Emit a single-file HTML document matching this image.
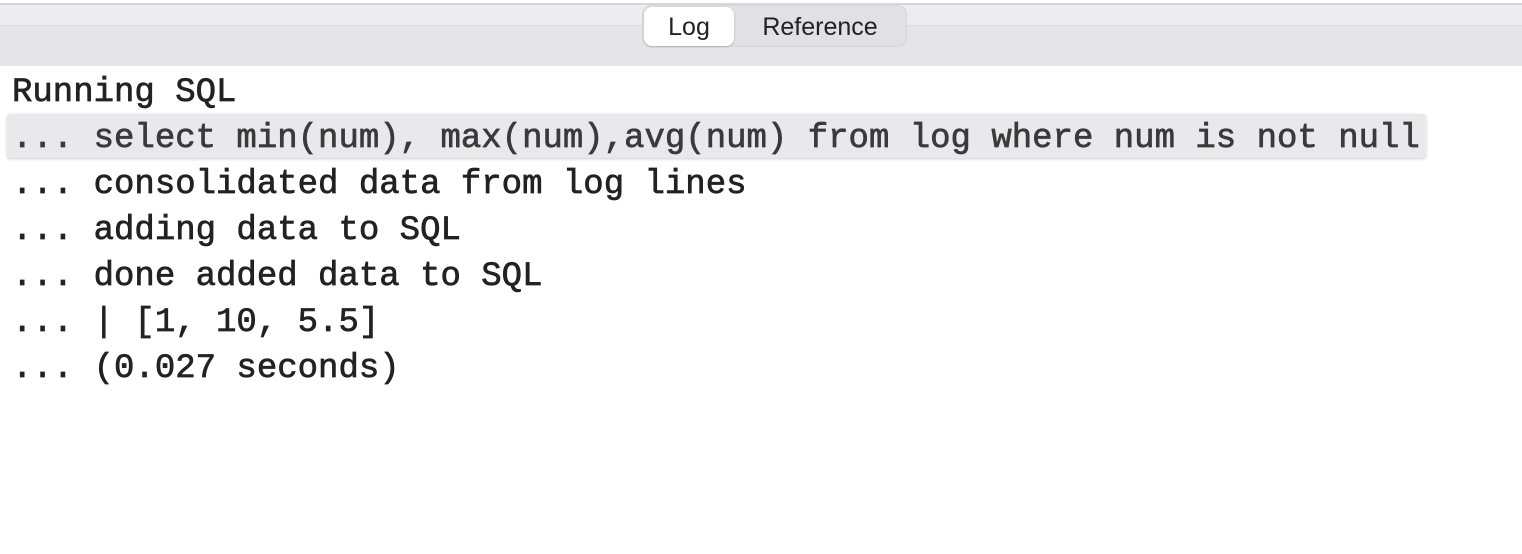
<!DOCTYPE html>
<html><head><style>
html,body{margin:0;padding:0;width:1522px;height:554px;background:#fff;overflow:hidden}
.top{position:absolute;left:0;top:0;width:1522px;height:3px;background:#fff}
.bar1{position:absolute;left:0;top:3px;width:1522px;height:2px;background:#d6d6d9}
.bar2{position:absolute;left:0;top:5px;width:1522px;height:20px;background:#ededf1}
.barl{position:absolute;left:0;top:25px;width:1522px;height:1px;background:#dcdce0}
.bar3{position:absolute;left:0;top:26px;width:1522px;height:40px;background:#e4e4e9}
.seg{position:absolute;left:642px;top:5px;width:265px;height:42px;border-radius:9px;background:#e0e0e5;border:1px solid #d6d6db;box-sizing:border-box}
.log{position:absolute;left:644px;top:7px;width:90px;height:39px;border-radius:8px;background:#fff;box-shadow:0 1px 2px rgba(0,0,0,.2);font:25px "Liberation Sans",sans-serif;color:#222;text-align:center;line-height:40px}
.ref{position:absolute;left:736px;top:7px;width:168px;height:39px;font:25px "Liberation Sans",sans-serif;color:#222;text-align:center;line-height:40px}
.hl{position:absolute;left:7px;top:114px;width:1419px;height:44px;background:#e9e9eb;border-radius:3px;box-shadow:0 1px 3px rgba(0,0,0,.2)}
.txt{position:absolute;left:12px;top:70px;font-family:"Liberation Mono",monospace;font-size:34px;line-height:46px;color:#222;white-space:pre;-webkit-text-stroke:0.7px #222}
.txt div:nth-child(2){color:#3a3a3a;-webkit-text-stroke:0.7px #3a3a3a}
</style></head><body>
<div class="top"></div><div class="bar1"></div><div class="bar2"></div><div class="barl"></div><div class="bar3"></div>
<div class="seg"></div>
<div class="log">Log</div><div class="ref">Reference</div>
<div class="hl"></div>
<div class="txt"><div>Running SQL</div><div>... select min(num), max(num),avg(num) from log where num is not null</div><div>... consolidated data from log lines</div><div>... adding data to SQL</div><div>... done added data to SQL</div><div>... | [1, 10, 5.5]</div><div>... (0.027 seconds)</div></div>
</body></html>
